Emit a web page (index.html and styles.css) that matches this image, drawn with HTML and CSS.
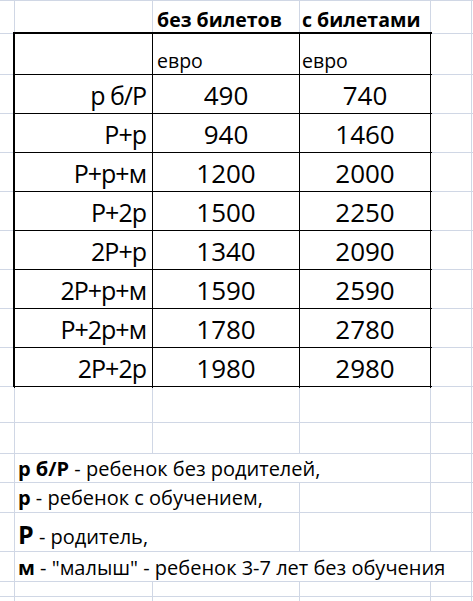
FILE: index.html
```html
<!DOCTYPE html>
<html lang="ru">
<head>
<meta charset="utf-8">
<title>Цены</title>
<link rel="stylesheet" href="styles.css">
</head>
<body>
<div class="sheet">
  <!-- row 1 -->
  <div class="c"></div><div class="c"></div>
  <div class="c hdr pc">без билетов</div>
  <div class="c hdr pd">с билетами</div>
  <div class="c"></div><div class="c"></div>

  <!-- rows 2-10: column A -->
  <div class="c colA r2"></div><div class="c colA r3"></div><div class="c colA r4"></div>
  <div class="c colA r5"></div><div class="c colA r6"></div><div class="c colA r7"></div>
  <div class="c colA r8"></div><div class="c colA r9"></div><div class="c colA r10"></div>

  <!-- price table B2:D10 -->
  <div class="price">
    <div class="t"></div>
    <div class="t unit pc">евро</div>
    <div class="t unit pd">евро</div>

    <div class="t lbl">р б/Р</div><div class="t num">490</div><div class="t num">740</div>
    <div class="t lbl">Р+р</div><div class="t num">940</div><div class="t num">1460</div>
    <div class="t lbl">Р+р+м</div><div class="t num">1200</div><div class="t num">2000</div>
    <div class="t lbl">Р+2р</div><div class="t num">1500</div><div class="t num">2250</div>
    <div class="t lbl">2Р+р</div><div class="t num">1340</div><div class="t num">2090</div>
    <div class="t lbl">2Р+р+м</div><div class="t num">1590</div><div class="t num">2590</div>
    <div class="t lbl">Р+2р+м</div><div class="t num">1780</div><div class="t num">2780</div>
    <div class="t lbl">2Р+2р</div><div class="t num">1980</div><div class="t num">2980</div>
  </div>

  <!-- rows 2-10: columns E, F -->
  <div class="c colE r2"></div><div class="c colF r2"></div>
  <div class="c colE r3"></div><div class="c colF r3"></div>
  <div class="c colE r4"></div><div class="c colF r4"></div>
  <div class="c colE r5"></div><div class="c colF r5"></div>
  <div class="c colE r6"></div><div class="c colF r6"></div>
  <div class="c colE r7"></div><div class="c colF r7"></div>
  <div class="c colE r8"></div><div class="c colF r8"></div>
  <div class="c colE r9"></div><div class="c colF r9"></div>
  <div class="c colE r10"></div><div class="c colF r10"></div>

  <!-- row 11 -->
  <div class="c"></div><div class="c"></div><div class="c"></div><div class="c"></div><div class="c"></div><div class="c"></div>
  <!-- row 12 -->
  <div class="c"></div><div class="c"></div><div class="c"></div><div class="c"></div><div class="c"></div><div class="c"></div>

  <!-- row 13 -->
  <div class="c"></div>
  <div class="c note span3 n1"><span><b>р б/Р</b> - ребенок без родителей,</span></div>
  <div class="c"></div><div class="c"></div>
  <!-- row 14 -->
  <div class="c"></div>
  <div class="c note span2 n2"><span><b>р</b> - ребенок с обучением,</span></div>
  <div class="c"></div><div class="c"></div><div class="c"></div>
  <!-- row 15 -->
  <div class="c"></div>
  <div class="c note span2 n3"><span><b class="big">Р</b> - родитель,</span></div>
  <div class="c"></div><div class="c"></div><div class="c"></div>
  <!-- row 16 -->
  <div class="c"></div>
  <div class="c note span4 n4"><span><b>м</b> - "малыш" - ребенок 3-7 лет без обучения</span></div>
  <div class="c"></div>
  <!-- row 17 -->
  <div class="c"></div><div class="c"></div><div class="c"></div><div class="c"></div><div class="c"></div><div class="c"></div>
  <!-- row 18 -->
  <div class="c"></div><div class="c"></div><div class="c"></div><div class="c"></div><div class="c"></div><div class="c"></div>
</div>
</body>
</html>
```

FILE: styles.css
```css
html, body {
  margin: 0;
  padding: 0;
  background: #ffffff;
}

body {
  width: 473px;
  height: 601px;
  overflow: hidden;
  font-family: "Open Sans", "Noto Sans", "DejaVu Sans", sans-serif;
  color: #000000;
}

.sheet {
  display: grid;
  grid-template-columns: 14px 137px 146px 130px 40px 1fr;
  grid-template-rows: 32px 40px repeat(8, 38px) 35px 30px 28px 29px 38px 29px 14px 1fr;
  gap: 1px;
  padding-top: 1px;
  width: 473px;
  height: 601px;
  box-sizing: border-box;
  background: #d0d7e5;
}

.c {
  background: #ffffff;
  display: flex;
  align-items: flex-end;
  white-space: nowrap;
  overflow: hidden;
  line-height: 1;
  min-width: 0;
}

/* explicit placement for the cells beside the price table */
.colA { grid-column: 1; }
.colE { grid-column: 5; }
.colF { grid-column: 6; }
.r2 { grid-row: 2; }
.r3 { grid-row: 3; }
.r4 { grid-row: 4; }
.r5 { grid-row: 5; }
.r6 { grid-row: 6; }
.r7 { grid-row: 7; }
.r8 { grid-row: 8; }
.r9 { grid-row: 9; }
.r10 { grid-row: 10; }

.hdr {
  font-weight: 700;
  font-size: 19.5px;
  padding-bottom: 4px;
}

.pc { padding-left: 4px; }
.pd { padding-left: 2px; }

/* bordered price table */
.price {
  grid-column: 2 / 5;
  grid-row: 2 / 11;
  margin: -2px;
  border: 2px solid #000000;
  display: grid;
  grid-template-columns: 137px 146px 130px;
  grid-template-rows: 40px repeat(8, 38px);
  gap: 1px;
  background: #000000;
}

.t {
  background: #ffffff;
  display: flex;
  align-items: flex-end;
  white-space: nowrap;
  line-height: 1;
}

.unit {
  font-size: 19.5px;
  padding-bottom: 4px;
}

.lbl {
  font-size: 25px;
  letter-spacing: -1px;
  justify-content: flex-end;
  padding-right: 6px;
  padding-bottom: 5px;
}

.num {
  font-size: 26px;
  justify-content: center;
  padding-bottom: 5px;
}

/* notes below the table */
.note {
  font-size: 20px;
  padding-left: 3px;
}

.note b { font-weight: 700; }
.note .big { font-size: 25px; }

.span2 { grid-column: span 2; }
.span3 { grid-column: span 3; }
.span4 { grid-column: span 4; }

.n1 { padding-bottom: 3px; }
.n2 { padding-bottom: 4px; }
.n3 { padding-bottom: 4px; }
.n4 { padding-bottom: 3px; }
```
